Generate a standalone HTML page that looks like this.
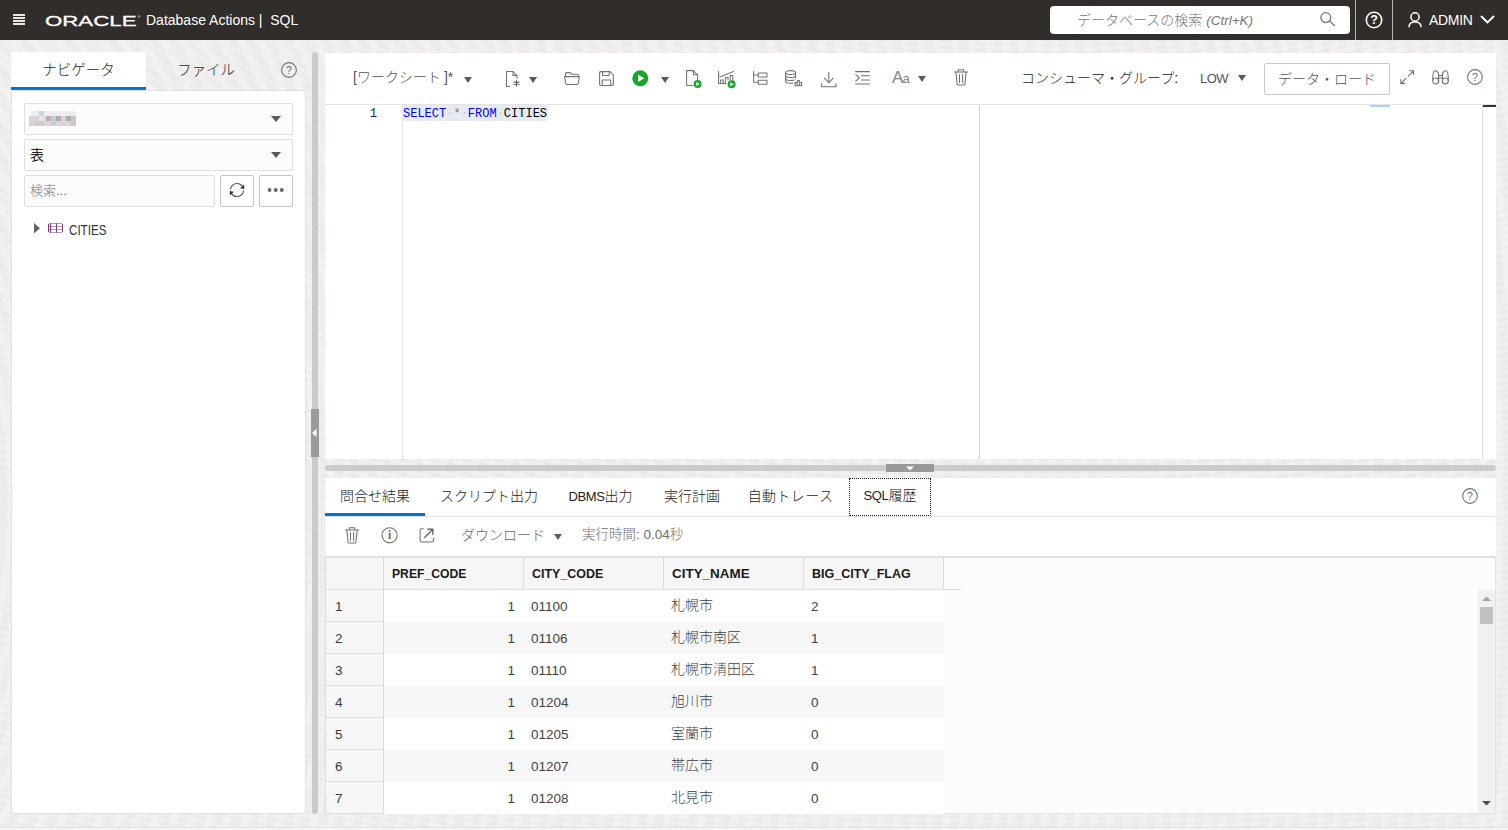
<!DOCTYPE html>
<html lang="ja">
<head>
<meta charset="utf-8">
<title>Database Actions | SQL</title>
<style>
*{box-sizing:border-box;margin:0;padding:0}
html,body{width:1508px;height:830px;overflow:hidden}
body{background:repeating-radial-gradient(ellipse 900px 500px at 70% -40%,rgba(255,255,255,.22) 0 3px,rgba(255,255,255,0) 6px 9px,rgba(255,255,255,.22) 12px),repeating-radial-gradient(ellipse 700px 900px at -20% 60%,rgba(0,0,0,.012) 0 4px,rgba(255,255,255,.18) 8px,rgba(0,0,0,.012) 16px),#eeedeb;font-family:"Liberation Sans","Noto Sans CJK JP",sans-serif;font-size:14px;color:#333;position:relative}
.abs{position:absolute}
svg{display:block;overflow:visible}
.jp{font-family:"Liberation Sans","Noto Sans CJK JP",sans-serif;font-weight:300}
/* header */
#hdr{position:absolute;left:0;top:0;width:1508px;height:40px;background:#312d2a;color:#fff}
#hdr .bar{position:absolute;left:13px;width:12px;height:2px;background:#e8e6e4}
#logo{position:absolute;left:45px;top:11px}
#title{position:absolute;left:146px;top:11px;font-size:14px;line-height:18px;white-space:pre;color:#fff}
#search{position:absolute;left:1050px;top:6px;width:300px;height:28px;background:#fff;border-radius:4px}
#search .ph{position:absolute;left:27px;top:4px;line-height:20px;font-size:14px;color:#777;white-space:pre}
.vdiv{position:absolute;top:0;width:1px;height:40px;background:#b9b6b3}
/* left */
#tab1{position:absolute;left:11px;top:52px;width:135px;height:38px;background:#fff;border-bottom:3px solid #0572ce;text-align:center;line-height:36px;font-size:14.5px;color:#1e1e1e}
#tab2{position:absolute;left:146px;top:52px;width:120px;height:38px;text-align:center;line-height:36px;font-size:14.5px;color:#2a2a2a}
#lpanel{position:absolute;left:11px;top:90px;width:295px;height:724px;background:#fff;border:1px solid #e3e2e0;border-radius:0 3px 3px 3px}
.sel{position:absolute;left:24px;width:269px;height:32px;background:#fcfcfc;border:1px solid #dfdfdf;border-radius:2px}
.caret{position:absolute;width:0;height:0;border-left:4.5px solid transparent;border-right:4.5px solid transparent;border-top:6px solid #5a5a5a}
.caret.big{border-left-width:5.5px;border-right-width:5.5px;border-top-width:6.5px}
.btn{position:absolute;background:#fff;border:1px solid #c4c4c4;border-radius:2px}
/* splitters */
#vsplit{position:absolute;left:312px;top:52px;width:6px;height:762px;background:#cacaca;border-radius:3px}
#vhandle{position:absolute;left:311px;top:409px;width:8px;height:48px;background:#9a9a9a}
#hsplit{position:absolute;left:325px;top:465px;width:1171px;height:6px;background:#cccccc;border-radius:3px}
#hhandle{position:absolute;left:886px;top:464px;width:48px;height:8px;background:#999}
/* right top */
#rtop{position:absolute;left:325px;top:53px;width:1171px;height:406px;background:#fff}
#tbar{position:absolute;left:0;top:0;width:1171px;height:52px;border-bottom:1px solid #e4e4e4}
#editor{position:absolute;left:0;top:52px;width:1171px;height:354px;background:#fffffe}
.ic{position:absolute}
.ic path,.ic rect,.ic circle,.ic line,.ic polyline,.ic ellipse{fill:none;stroke:#727272;stroke-width:1.05;stroke-linecap:round;stroke-linejoin:round}
.mono{font-family:"Liberation Mono","DejaVu Sans Mono",monospace;font-size:12px;line-height:18px}
.ws{color:#c3c8cc}
.lt{font-size:13px;letter-spacing:-0.4px}
/* bottom */
#rbot{position:absolute;left:325px;top:478px;width:1171px;height:336px;background:#fff}
.btab{position:absolute;top:0;height:38px;line-height:37px;font-size:14px;color:#222;text-align:center;white-space:nowrap}
#grid{position:absolute;left:0;top:78px;width:1171px;height:258px;background:#fcfcfc;border-top:2px solid #e0e2e2;border-right:1px solid #e4e4e4;border-bottom:1px solid #e4e4e4}
.hc{position:absolute;top:0;height:32px;background:#f6f6f6;border-right:1px solid #dcdede;border-bottom:1px solid #dcdede;font-weight:bold;font-size:13.5px;line-height:31px;padding-left:8px;color:#1a1a1a;white-space:nowrap}
.hc span{display:inline-block;transform-origin:0 50%;transform:scaleX(.9)}
.row{position:absolute;left:0;width:619px;height:32px;font-size:13.5px;line-height:33px;color:#444}
.row.odd{background:#fff}
.row.even{background:#f7f7f7}
.row div{position:absolute;top:0;height:32px;white-space:nowrap}
.row .rh{left:0;width:59px;background:#f7f7f7;border-left:1px solid #dcdcdc;border-right:1px solid #dcdcdc;border-bottom:1px solid #dcdcdc;padding-left:9px;color:#3a3a3a;line-height:33px}
.row .c1{left:59px;width:140px;text-align:right;padding-right:9px}
.row .c2{left:199px;width:140px;padding-left:7px}
.row .c3{left:339px;width:140px;padding-left:7px;font-size:14px;font-weight:300;color:#3f3f3f;line-height:30px}
.row .c4{left:479px;width:140px;padding-left:7px}
</style>
</head>
<body>
<div class="abs" style="left:0;top:827px;width:1508px;height:3px;background:#f6f5f4;border-top:1px solid #e3e2e0"></div>
<!-- HEADER -->
<div id="hdr">
  <div class="bar" style="top:14px"></div><div class="bar" style="top:17px"></div><div class="bar" style="top:20px"></div><div class="bar" style="top:23px"></div>
  <svg id="logo" width="96" height="18" viewBox="0 0 96 18"><text x="0" y="14.6" font-family="Liberation Sans, sans-serif" font-size="15.4" fill="#fff" stroke="#fff" stroke-width="0.3" textLength="91.5" lengthAdjust="spacingAndGlyphs">ORACLE</text><text x="92.5" y="7" font-family="Liberation Sans, sans-serif" font-size="4" fill="#fff">®</text></svg>
  <div id="title">Database Actions |  SQL</div>
  <div id="search"><div class="ph"><span class="jp">データベースの検索</span> <i style="font-size:13.5px">(Ctrl+K)</i></div>
    <svg class="abs" style="left:270px;top:6px" width="16" height="16" viewBox="0 0 16 16"><circle cx="5.8" cy="5.6" r="4.9" fill="none" stroke="#777" stroke-width="1.3"/><line x1="9.4" y1="9" x2="14.6" y2="13.6" stroke="#777" stroke-width="1.3" stroke-linecap="round"/></svg>
  </div>
  <div class="vdiv" style="left:1355px"></div>
  <svg class="abs" style="left:1365px;top:11px" width="18" height="18" viewBox="0 0 18 18"><circle cx="9" cy="9" r="7.7" fill="none" stroke="#fff" stroke-width="1.6"/><text x="9" y="13.4" text-anchor="middle" font-family="Liberation Sans, sans-serif" font-weight="bold" font-size="12.5" fill="#fff">?</text></svg>
  <div class="vdiv" style="left:1392px"></div>
  <svg class="abs" style="left:1408px;top:12px" width="14" height="16" viewBox="0 0 14 16"><circle cx="7" cy="4.9" r="4.1" fill="none" stroke="#fff" stroke-width="1.5"/><path d="M1 15.2 C1 11.6 3.6 10 7 10 C10.4 10 13 11.6 13 15.2" fill="none" stroke="#fff" stroke-width="1.5"/></svg>
  <div class="abs" style="left:1429px;top:11px;font-size:14px;line-height:18px;color:#fff;letter-spacing:-0.3px">ADMIN</div>
  <svg class="abs" style="left:1480px;top:15px" width="15" height="9" viewBox="0 0 15 9"><polyline points="1,1 7.5,7.5 14,1" fill="none" stroke="#fff" stroke-width="1.9"/></svg>
</div>

<!-- LEFT -->
<div id="tab1" class="jp">ナビゲータ</div>
<div id="tab2" class="jp">ファイル</div>
<svg class="abs" style="left:280px;top:61px" width="18" height="18" viewBox="0 0 18 18"><circle cx="9" cy="9" r="7.4" fill="none" stroke="#727272" stroke-width="1.1"/><text x="9" y="12.8" text-anchor="middle" font-family="Liberation Sans, sans-serif" font-size="10.5" fill="#6b6b6b">?</text></svg>
<div id="lpanel"></div>
<div class="sel" style="top:103px"><div class="caret big" style="left:246px;top:12px"></div>
  <svg class="abs" style="left:4px;top:7px" width="50" height="16" viewBox="0 0 50 16"><rect x="2" y="0" width="45" height="5" fill="#eeeef0"/><rect x="0" y="5" width="47" height="10" fill="#d9d4d6"/><rect x="10" y="0" width="5" height="5" fill="#cdd3da"/><rect x="10" y="5" width="5" height="5" fill="#dde8f0"/><rect x="17" y="5" width="5" height="5" fill="#c2aeb0"/><rect x="27" y="5" width="5" height="5" fill="#b3a8b4"/><rect x="37" y="5" width="5" height="5" fill="#aeae9f"/><rect x="22" y="5" width="5" height="10" fill="#c5ced6"/><rect x="42" y="5" width="5" height="10" fill="#cfc3d3"/><rect x="5" y="10" width="10" height="5" fill="#d6cbc0"/></svg>
</div>
<div class="sel" style="top:139px"><div class="abs" style="left:5px;top:5px;line-height:20px;font-size:14px;color:#222">表</div><div class="caret big" style="left:246px;top:12px"></div></div>
<div class="sel" style="top:175px;width:191px"><div class="abs jp" style="left:5px;top:5px;line-height:20px;font-size:13px;color:#787878">検索...</div></div>
<div class="btn" style="left:220px;top:175px;width:34px;height:32px">
  <svg class="abs" style="left:8px;top:6px" width="16" height="16" viewBox="0 0 16 16"><path d="M1.5 7.6 A6.5 6.5 0 0 1 13.4 4.4" fill="none" stroke="#555" stroke-width="1.05"/><path d="M14.5 8.4 A6.5 6.5 0 0 1 2.6 11.6" fill="none" stroke="#555" stroke-width="1.05"/><polygon points="11,6.3 15.3,6.9 15.1,2.6" fill="#333"/><polygon points="5,9.7 0.7,9.1 0.9,13.4" fill="#333"/></svg>
</div>
<div class="btn" style="left:259px;top:175px;width:34px;height:32px">
  <svg class="abs" style="left:7px;top:11px" width="18" height="6" viewBox="0 0 18 6"><circle cx="2.6" cy="3" r="1.9" fill="#666"/><circle cx="8.7" cy="3" r="2" fill="#666"/><circle cx="14.8" cy="3" r="2" fill="#666"/></svg>
</div>
<svg class="abs" style="left:34px;top:223px" width="7" height="11" viewBox="0 0 7 11"><polygon points="0,0 6,5.2 0,10.4" fill="#666"/></svg>
<svg class="abs" style="left:47px;top:223px" width="17" height="11" viewBox="0 0 17 11"><g stroke="#a2a2a2" stroke-width="1" fill="none"><path d="M2 0.5 H15 M1 3.5 H16 M1 6.5 H16 M2 9.5 H15"/></g><g stroke="#8c358e" stroke-width="1" fill="none"><path d="M1.5 1 V9 M3.5 0.5 V9.5 M9.5 0.5 V9.5 M15.5 1 V9"/></g></svg>
<div class="abs" style="left:68.5px;top:221px;font-size:14px;line-height:18px;color:#333"><span style="display:inline-block;transform-origin:0 50%;transform:scaleX(.83)">CITIES</span></div>

<!-- SPLITTERS -->
<div id="vsplit"></div><div id="vhandle"><svg class="abs" style="left:1px;top:20px" width="5" height="8" viewBox="0 0 5 8"><polygon points="4.5,0 4.5,8 0,4" fill="#fff"/></svg></div>
<div id="hsplit"></div><div id="hhandle"><svg class="abs" style="left:20px;top:2px" width="8" height="5" viewBox="0 0 8 5"><polygon points="0,0.5 8,0.5 4,4.5" fill="#fff"/></svg></div>

<!-- RIGHT TOP -->
<div id="rtop">
  <div id="tbar">
    <div class="abs jp" style="left:28px;top:14px;line-height:20px;font-size:14px;color:#555;white-space:nowrap">[ワークシート<span style="margin-left:3px">]*</span></div>
    <div class="caret" style="left:139px;top:24px"></div>
    <!-- new file -->
    <svg class="ic" style="left:181px;top:18px" width="15" height="16" viewBox="0 0 15 16"><path d="M3.5 15.5 H0.5 V0.5 H7 L11 4.5 V7.5"/><path d="M7 0.5 V4.5 H11"/><path d="M10.5 9.5 V15 M7.9 10.9 L13.1 13.6 M13.1 10.9 L7.9 13.6" style="stroke:#444"/></svg>
    <div class="caret" style="left:204px;top:24px"></div>
    <!-- folder -->
    <svg class="ic" style="left:239px;top:19px" width="16" height="13" viewBox="0 0 16 13"><path d="M1.5 4.5 V1.8 Q1.5 0.6 2.7 0.6 H6 L7.6 2.2 H13 Q14.3 2.2 14.3 3.4 V4.5"/><path d="M0.6 4.6 H15.4 L14.4 11.2 Q14.2 12.4 13 12.4 H3 Q1.8 12.4 1.6 11.2 Z"/></svg>
    <!-- save -->
    <svg class="ic" style="left:274px;top:18px" width="15" height="15" viewBox="0 0 15 15"><path d="M1.8 0.6 H11 L14.4 4 V13.2 Q14.4 14.4 13.2 14.4 H1.8 Q0.6 14.4 0.6 13.2 V1.8 Q0.6 0.6 1.8 0.6 Z"/><path d="M3.6 0.8 V4.4 H10.2 V0.8"/><path d="M3.2 14.2 V9 H11.8 V14.2"/></svg>
    <!-- run -->
    <svg class="abs" style="left:307px;top:17px" width="17" height="17" viewBox="0 0 17 17"><circle cx="8.3" cy="8.3" r="8" fill="#18a62c"/><polygon points="6.1,4.6 12.2,8.3 6.1,12" fill="#fff"/></svg>
    <div class="caret" style="left:336px;top:24px"></div>
    <!-- run script -->
    <svg class="ic" style="left:361px;top:17px" width="17" height="19" viewBox="0 0 17 19"><path d="M6.5 15.5 H0.6 V0.6 H7.4 L11.6 4.8 V9.5"/><path d="M7.4 0.6 V4.8 H11.6"/><circle cx="11.6" cy="14" r="4" style="fill:#18a62c;stroke:none"/><polygon points="10.3,12 13.8,14 10.3,16" style="fill:#fff;stroke:none"/></svg>
    <!-- autotrace -->
    <svg class="ic" style="left:393px;top:18px" width="19" height="18" viewBox="0 0 19 18"><path d="M0.6 0.6 V12.4 H8"/><path d="M2 6 L15.5 0.6"/><path d="M2.6 12.2 V9 H5.2 V12.2"/><path d="M7.4 12.2 V6.4 H10 V9"/><path d="M12.2 9 V4.4 H14.8 V10"/><circle cx="13.6" cy="13.2" r="4" style="fill:#18a62c;stroke:none"/><polygon points="12.3,11.2 15.8,13.2 12.3,15.2" style="fill:#fff;stroke:none"/></svg>
    <!-- tree / explain -->
    <svg class="ic" style="left:428px;top:18px" width="15" height="15" viewBox="0 0 15 15"><path d="M0.6 0.6 V11.2 H5.2"/><path d="M0.6 4 H5.2"/><rect x="5.2" y="2" width="8.8" height="4"/><rect x="5.2" y="9.2" width="8.8" height="4"/></svg>
    <!-- db -->
    <svg class="ic" style="left:460px;top:17px" width="18" height="17" viewBox="0 0 18 17"><ellipse cx="5.6" cy="2.6" rx="5" ry="2"/><path d="M0.6 2.6 V11.2 Q0.6 13.2 5.6 13.2 Q7 13.2 8 13"/><path d="M10.6 2.6 V8"/><path d="M0.6 5.6 Q0.6 7.6 5.6 7.6 Q10.6 7.6 10.6 5.6"/><path d="M0.6 8.4 Q0.6 10.4 5.6 10.4 Q8 10.4 9.2 9.9"/><path d="M10 15.8 V12.6 H12.2 V15.8 M12.2 15.8 V10.6 H14.4 V15.8 M14.4 15.8 V12.6 H16.6 V15.8 H10"/></svg>
    <!-- download -->
    <svg class="ic" style="left:496px;top:19px" width="16" height="16" viewBox="0 0 16 16"><path d="M7.8 0.6 V10.4"/><path d="M3.4 6.2 L7.8 10.6 L12.2 6.2"/><path d="M0.6 11.6 V14.8 H15 V11.6"/></svg>
    <!-- indent -->
    <svg class="ic" style="left:530px;top:18px" width="15" height="14" viewBox="0 0 15 14"><path d="M0.6 0.6 H14.4"/><path d="M6.4 4.7 H14.4"/><path d="M6.4 8.9 H14.4"/><path d="M0.6 13 H14.4"/><path d="M0.8 3.6 L4.4 6.8 L0.8 10"/></svg>
    <!-- Aa -->
    <div class="abs" style="left:567px;top:14px;font-size:17px;line-height:22px;color:#848484;white-space:nowrap;letter-spacing:-0.8px">A<span style="font-size:13px">a</span></div>
    <div class="caret" style="left:593px;top:23px"></div>
    <!-- trash -->
    <svg class="ic" style="left:629px;top:16px" width="14" height="17" viewBox="0 0 14 17"><path d="M0.5 2.9 H13.5"/><path d="M4.3 2.7 V0.7 H9.7 V2.7"/><path d="M1.9 3.1 L3.1 15.2 Q3.2 16 4.1 16 H9.9 Q10.8 16 10.9 15.2 L12.1 3.1"/><path d="M5.5 5.4 V13.4 M8.6 5.4 V13.4"/></svg>
    <!-- right side -->
    <div class="abs jp" style="left:696px;top:15px;line-height:20px;font-size:14px;color:#1c1c1c;white-space:nowrap">コンシューマ・グループ:</div>
    <div class="abs" style="left:875px;top:16px;line-height:20px;font-size:13px;color:#555;white-space:nowrap;letter-spacing:-0.5px">LOW</div>
    <div class="caret" style="left:913px;top:22px"></div>
    <div class="btn" style="left:939px;top:10px;width:126px;height:32px;border-color:#c9c9c9"><div class="abs jp" style="left:0;top:5px;width:124px;text-align:center;line-height:20px;font-size:14px;color:#555;white-space:nowrap">データ・ロード</div></div>
    <!-- expand -->
    <svg class="ic" style="left:1075px;top:17px" width="15" height="15" viewBox="0 0 15 15"><path d="M8.2 6.2 L13.6 0.8 M9.6 0.8 H13.6 V4.8"/><path d="M6.2 8.2 L0.8 13.6 M0.8 9.6 V13.6 H4.8"/></svg>
    <!-- binoculars -->
    <svg class="ic" style="left:1107px;top:17px" width="17" height="15" viewBox="0 0 17 15"><path d="M0.7 10 Q0.7 1 3 0.8 Q5.6 0.6 6.6 4 V10.4"/><path d="M16.3 10 Q16.3 1 14 0.8 Q11.4 0.6 10.4 4 V10.4"/><circle cx="3.7" cy="11" r="3"/><circle cx="13.3" cy="11" r="3"/><path d="M6.6 5.4 H10.4 M6.6 8 H10.4"/></svg>
    <!-- help -->
    <svg class="abs" style="left:1141px;top:15px" width="18" height="18" viewBox="0 0 18 18"><circle cx="9" cy="9" r="7.4" fill="none" stroke="#727272" stroke-width="1.1"/><text x="9" y="12.8" text-anchor="middle" font-family="Liberation Sans, sans-serif" font-size="10.5" fill="#6b6b6b">?</text></svg>
  </div>
  <div id="editor">
    <div class="abs" style="left:77px;top:0;width:1px;height:354px;background:#e6e6e6"></div>
    <div class="abs" style="left:654px;top:0;width:1px;height:354px;background:#d3d3d3"></div>
    <div class="abs" style="left:1157px;top:0;width:1px;height:354px;background:#dcdcdc"></div>
    <div class="abs" style="left:1158px;top:0;width:13px;height:2px;background:#333"></div>
    <div class="abs" style="left:1045px;top:0;width:20px;height:2px;background:#a7d1f8"></div>
    <div class="abs" style="left:78px;top:0;width:145px;height:16px;background:#e5ebf1;border-radius:3px"></div>
    <div class="abs mono" style="left:28px;top:0px;width:24px;text-align:right;color:#0b216f">1</div>
    <div class="abs mono" style="left:78px;top:0px;white-space:pre"><span style="color:#0000ff">SELECT</span><span class="ws">·</span><span style="color:#777">*</span><span class="ws">·</span><span style="color:#0000ff">FROM</span><span class="ws">·</span><span style="color:#000">CITIES</span></div>
  </div>
</div>

<!-- RIGHT BOTTOM -->
<div id="rbot">
  <div class="btab jp" style="left:0;width:100px;border-bottom:3px solid #0572ce">問合せ結果</div>
  <div class="btab jp" style="left:100px;width:128px">スクリプト出力</div>
  <div class="btab jp" style="left:228px;width:95px"><span class="lt">DBMS</span>出力</div>
  <div class="btab jp" style="left:323px;width:88px">実行計画</div>
  <div class="btab jp" style="left:409px;width:113px;letter-spacing:0.4px">自動トレース</div>
  <div class="btab jp" style="left:524px;width:82px;border:1px dotted #222;line-height:32px"><span class="lt">SQL</span>履歴</div>
  <svg class="abs" style="left:1136px;top:9px" width="18" height="18" viewBox="0 0 18 18"><circle cx="9" cy="9" r="7.4" fill="none" stroke="#727272" stroke-width="1.1"/><text x="9" y="12.8" text-anchor="middle" font-family="Liberation Sans, sans-serif" font-size="10.5" fill="#6b6b6b">?</text></svg>
  <div class="abs" style="left:0;top:38px;width:1171px;height:1px;background:#e2e2e2"></div>
  <!-- result toolbar -->
  <svg class="ic" style="left:20px;top:49px" width="14" height="17" viewBox="0 0 14 17"><path d="M0.5 2.9 H13.5"/><path d="M4.3 2.7 V0.7 H9.7 V2.7"/><path d="M1.9 3.1 L3.1 15.2 Q3.2 16 4.1 16 H9.9 Q10.8 16 10.9 15.2 L12.1 3.1"/><path d="M5.5 5.4 V13.4 M8.6 5.4 V13.4"/></svg>
  <svg class="abs" style="left:55px;top:48px" width="19" height="19" viewBox="0 0 19 19"><circle cx="9.6" cy="9.3" r="7.6" fill="none" stroke="#727272" stroke-width="1.1"/><text x="9.7" y="13.2" text-anchor="middle" font-family="Liberation Serif, serif" font-weight="bold" font-size="11.5" fill="#6a6a6a">i</text></svg>
  <svg class="ic" style="left:94px;top:50px" width="16" height="15" viewBox="0 0 16 15"><path d="M4.4 0.7 H2.4 Q1.1 0.7 1.1 2 V12.6 Q1.1 13.9 2.4 13.9 H13.2 Q14.5 13.9 14.5 12.6 V10.2"/><path d="M5.6 9.6 L13.6 1.6 M8.8 1.3 H13.9 V6.4" style="stroke-width:1.4;stroke:#666"/></svg>
  <div class="abs jp" style="left:136px;top:47px;line-height:20px;font-size:14px;color:#666;white-space:nowrap">ダウンロード</div>
  <div class="caret" style="left:229px;top:56px"></div>
  <div class="abs jp" style="left:257px;top:47px;line-height:20px;font-size:13.5px;color:#6e6e6e;white-space:nowrap">実行時間: 0.04秒</div>
  <!-- grid -->
  <div id="grid">
    <div class="hc" style="left:0;width:59px;border-left:1px solid #dcdcdc"></div>
    <div class="hc" style="left:59px;width:140px"><span>PREF_CODE</span></div>
    <div class="hc" style="left:199px;width:140px"><span style="transform:scaleX(.923)">CITY_CODE</span></div>
    <div class="hc" style="left:339px;width:140px"><span style="transform:scaleX(.995)">CITY_NAME</span></div>
    <div class="hc" style="left:479px;width:140px"><span style="transform:scaleX(.927)">BIG_CITY_FLAG</span></div>
    <div class="abs" style="left:619px;top:31px;width:17px;height:1px;background:#dcdcdc"></div>
    <div class="row odd" style="top:32px"><div class="rh">1</div><div class="c1">1</div><div class="c2">01100</div><div class="c3">札幌市</div><div class="c4">2</div></div>
    <div class="row even" style="top:64px"><div class="rh">2</div><div class="c1">1</div><div class="c2">01106</div><div class="c3">札幌市南区</div><div class="c4">1</div></div>
    <div class="row odd" style="top:96px"><div class="rh">3</div><div class="c1">1</div><div class="c2">01110</div><div class="c3">札幌市清田区</div><div class="c4">1</div></div>
    <div class="row even" style="top:128px"><div class="rh">4</div><div class="c1">1</div><div class="c2">01204</div><div class="c3">旭川市</div><div class="c4">0</div></div>
    <div class="row odd" style="top:160px"><div class="rh">5</div><div class="c1">1</div><div class="c2">01205</div><div class="c3">室蘭市</div><div class="c4">0</div></div>
    <div class="row even" style="top:192px"><div class="rh">6</div><div class="c1">1</div><div class="c2">01207</div><div class="c3">帯広市</div><div class="c4">0</div></div>
    <div class="row odd" style="top:224px"><div class="rh">7</div><div class="c1">1</div><div class="c2">01208</div><div class="c3">北見市</div><div class="c4">0</div></div>
    <div class="abs" style="left:1153px;top:32px;width:17px;height:223px;background:#f1f1f1">
      <svg class="abs" style="left:4px;top:6px" width="9" height="5" viewBox="0 0 9 5"><polygon points="0,5 4.5,0.5 9,5" fill="#a3a3a3"/></svg>
      <div class="abs" style="left:2px;top:17px;width:13px;height:17px;background:#c1c1c1"></div>
      <svg class="abs" style="left:4px;top:211px" width="9" height="5" viewBox="0 0 9 5"><polygon points="0,0 4.5,4.5 9,0" fill="#505050"/></svg>
    </div>
  </div>
</div>
</body>
</html>
